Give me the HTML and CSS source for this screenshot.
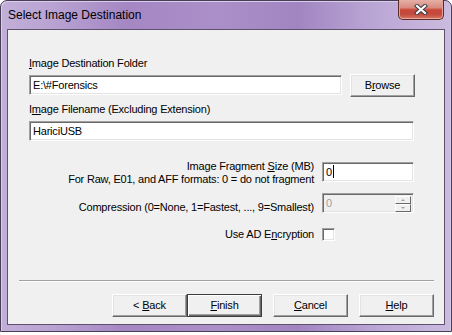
FILE: index.html
```html
<!DOCTYPE html>
<html>
<head>
<meta name="viewport" content="width=device-width, initial-scale=1">
<link rel="stylesheet" href="styles.css">
</head>
<body>
<div class="window">
  <div class="titlebar">
    <span class="title">Select Image Destination</span>
    <div class="closeBtn">
      <svg width="14" height="11" viewBox="0 0 14 11">
        <path d="M3 2 L11 9 M11 2 L3 9" stroke="#3c3c46" stroke-width="4.2" stroke-linecap="square"/>
        <path d="M3 2 L11 9 M11 2 L3 9" stroke="#ffffff" stroke-width="2.2" stroke-linecap="square"/>
      </svg>
    </div>
  </div>
  <div class="client">
    <div class="form">
      <div class="lbl"><u>I</u>mage Destination Folder</div>
      <div class="folderRow">
        <div class="field folder">E:\#Forensics</div>
        <div class="btn browse"><span>B<u>r</u>owse</span></div>
      </div>
      <div class="lbl lbl2">I<u>m</u>age Filename (Excluding Extension)</div>
      <div class="field filename">HariciUSB</div>

      <div class="opt first">
        <div class="optLbl">Image Fragment <u>S</u>ize (MB)<br>For Raw, E01, and AFF formats: 0 = do not fragment</div>
        <div class="field small">0<span class="caret"></span></div>
      </div>
      <div class="opt second">
        <div class="optLbl pad">Compression (0=None, 1=Fastest, ..., 9=Smallest)</div>
        <div class="field small disabled">0
          <div class="spin">
            <div class="spinBtn"><span class="arrowUp"></span></div>
            <div class="spinBtn"><span class="arrowDown"></span></div>
          </div>
        </div>
      </div>
      <div class="opt third">
        <div class="optLbl pad1">Use AD E<u>n</u>cryption</div>
        <div class="check"></div>
      </div>
    </div>
    <div class="footer">
      <div class="sep"></div>
      <div class="buttons">
        <div class="btn wiz"><span>&lt; <u>B</u>ack</span></div>
        <div class="btn wiz default"><span><u>F</u>inish</span></div>
        <div class="btn wiz gapL"><span><u>C</u>ancel</span></div>
        <div class="btn wiz gapL2"><span><u>H</u>elp</span></div>
      </div>
    </div>
  </div>
</div>
</body>
</html>
```
FILE: styles.css
```css
* {
  box-sizing: border-box;
}
body {
  margin: 0;
  background-color: #ffffff;
  font-family: "Liberation Sans", Arial, sans-serif;
}
/* window frame */
.window {
  width: 452px;
  height: 332px;
  border: 1px solid #4a3d58;
  border-radius: 7px 7px 0 0;
  padding: 0 6px 6px 6px;
  display: flex;
  flex-direction: column;
  background: linear-gradient(to right, #c2afd8 0%, #b8a2d2 12%, #a487c3 28%, #ab8fc8 48%, #a185c1 66%, #b9a5d4 82%, #cbbbdf 100%);
  box-shadow: inset 1px 1px 0 #d9cde8, inset -1px 0 0 #d4c6e4;
}
.titlebar {
  height: 28px;
  display: flex;
  align-items: flex-start;
  margin: 0 -6px;
  padding-left: 7px;
  padding-right: 7px;
}
.title {
  font-size: 12px;
  line-height: 28px;
  color: #000;
}
.closeBtn {
  margin-left: auto;
  margin-top: -1px;
  width: 46px;
  height: 20px;
  border: 1px solid #5e2b2b;
  border-top: none;
  border-radius: 0 0 5px 5px;
  background: linear-gradient(#e6b0a6 0%, #d98b80 40%, #c9473a 52%, #c24a3c 75%, #d97a68 100%);
  box-shadow: inset 0 -1px 0 #eaa79a, inset 1px 0 0 #e0a096, inset -1px 0 0 #e0a096;
  display: flex;
  align-items: center;
  justify-content: center;
}
/* client area */
.client {
  height: 296px;
  background-color: #f0f0f0;
  border: 1px solid #5f506e;
  display: flex;
  flex-direction: column;
  font-size: 11px;
  letter-spacing: -0.2px;
  line-height: 13px;
  color: #000;
}
.form {
  padding: 27px 0 0 21px;
}
.folderRow {
  display: flex;
  align-items: flex-start;
  margin-top: 4px;
}
.lbl2 {
  margin-top: 6px;
}
/* sunken text field */
.field {
  height: 20px;
  background-color: #fff;
  border: 1px solid;
  border-color: #a0a0a0 #ffffff #ffffff #a0a0a0;
  box-shadow: inset 1px 1px 0 #696969, inset -1px -1px 0 #e3e3e3;
  padding: 0 3px;
  line-height: 18px;
  position: relative;
}
.folder {
  width: 313px;
  margin-top: 1px;
}
.browse {
  width: 65px;
  height: 23px;
  margin-left: 8px;
}
.filename {
  width: 385px;
  margin-top: 5px;
}
.opt {
  display: grid;
  grid-template-columns: 285px 92px;
  column-gap: 8px;
  align-items: start;
}
.optLbl {
  text-align: right;
}
.first {
  margin-top: 19px;
}
.first .field {
  margin-top: 2px;
}
.second {
  margin-top: 7px;
}
.pad {
  padding-top: 8px;
}
.pad1 {
  padding-top: 2px;
}
.third {
  margin-top: 12px;
}
.small {
  width: 92px;
}
.caret {
  display: inline-block;
  width: 1px;
  height: 13px;
  background-color: #000;
  vertical-align: -2px;
  margin-left: 1px;
}
.disabled {
  background-color: #f0f0f0;
  color: #a0a0a0;
}
.spin {
  position: absolute;
  right: 2px;
  top: 2px;
  width: 16px;
  display: flex;
  flex-direction: column;
}
.spinBtn {
  height: 8px;
  background-color: #f0f0f0;
  border: 1px solid;
  border-color: #ffffff #696969 #696969 #ffffff;
  display: flex;
  align-items: center;
  justify-content: center;
}
.arrowUp {
  width: 0;
  height: 0;
  border-left: 2px solid transparent;
  border-right: 2px solid transparent;
  border-bottom: 2px solid #a0a0a0;
}
.arrowDown {
  width: 0;
  height: 0;
  border-left: 2px solid transparent;
  border-right: 2px solid transparent;
  border-top: 2px solid #a0a0a0;
}
.check {
  width: 13px;
  height: 13px;
  margin-top: 2px;
  background-color: #fff;
  border: 1px solid;
  border-color: #a0a0a0 #ffffff #ffffff #a0a0a0;
  box-shadow: inset 1px 1px 0 #696969, inset -1px -1px 0 #e3e3e3;
}
/* raised classic button */
.btn {
  background-color: #f0f0f0;
  border: 1px solid;
  border-color: #ffffff #696969 #696969 #ffffff;
  box-shadow: inset -1px -1px 0 #a0a0a0, inset 1px 1px 0 #e3e3e3;
  display: flex;
  align-items: center;
  justify-content: center;
}
.footer {
  margin-top: auto;
  padding: 0 10px 7px 11px;
}
.sep {
  border-top: 1px solid #a0a0a0;
  border-bottom: 1px solid #ffffff;
}
.buttons {
  display: flex;
  justify-content: flex-end;
  margin-top: 12px;
}
.wiz {
  width: 75px;
  height: 23px;
}
.default {
  border: 1px solid #3c3c3c;
  box-shadow: inset 1px 1px 0 #ffffff, inset -1px -1px 0 #696969, inset -2px -2px 0 #a0a0a0;
}
.gapL {
  margin-left: 11px;
}
.gapL2 {
  margin-left: 11px;
}
```
